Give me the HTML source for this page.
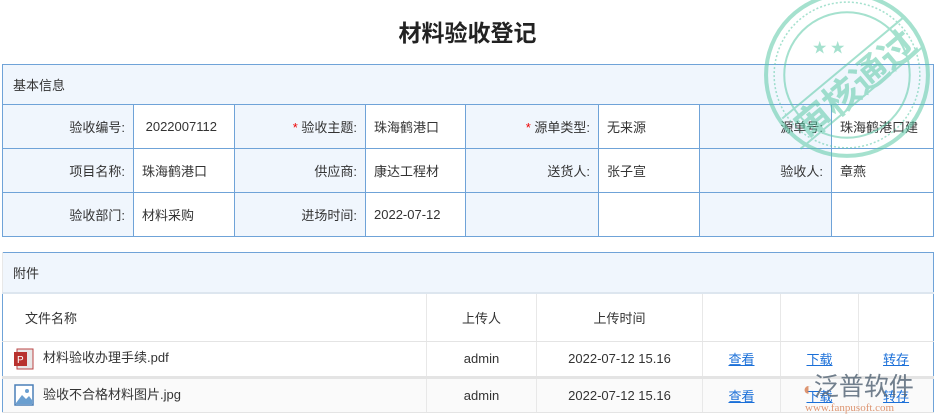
<!DOCTYPE html>
<html><head><meta charset="utf-8"><style>
body{margin:0;width:935px;height:420px;background:#fff;font-family:"Liberation Sans","Noto Sans CJK SC",sans-serif;font-size:13px;color:#333;position:relative;overflow:hidden}
.t{position:absolute;left:0;top:14px;width:935px;text-align:center;font-size:23px;font-weight:bold;color:#222}
table{border-collapse:collapse;position:absolute;table-layout:fixed}
#a{left:2px;top:64px;width:931px}
#a td{border:1px solid #6fa3d8;height:43px;padding:0 8px}
#a td.l{background:#f0f6fd;text-align:right;color:#333}
#a td.h{background:#f0f6fd;height:39px;padding-left:10px}
.r{color:#e00}
#b{left:2px;top:252px;width:931px;border:1px solid #6fa3d8}
#b td{border-bottom:1px solid #e4e4e4;border-left:1px solid #e8e8e8;text-align:center;padding:0}
#b td.h{background:#f0f6fd;height:39px;text-align:left;padding-left:10px;border-bottom:2px solid #dde6ef}
a{color:#1a6fd8;text-decoration:underline}
.ic{display:inline-block;vertical-align:middle;margin-right:8px}
</style></head><body>
<div class="t">材料验收登记</div>
<table id="a">
<colgroup><col style="width:131px"><col style="width:101px"><col style="width:131px"><col style="width:100px"><col style="width:133px"><col style="width:101px"><col style="width:132px"><col style="width:102px"></colgroup>
<tr><td class="h" colspan="8">基本信息</td></tr>
<tr><td class="l">验收编号:</td><td>&nbsp;2022007112</td><td class="l"><span class="r">*</span> 验收主题:</td><td>珠海鹤港口</td><td class="l"><span class="r">*</span> 源单类型:</td><td>无来源</td><td class="l">源单号:</td><td style="white-space:nowrap;overflow:hidden;padding-right:0">珠海鹤港口建</td></tr>
<tr><td class="l">项目名称:</td><td>珠海鹤港口</td><td class="l">供应商:</td><td>康达工程材</td><td class="l">送货人:</td><td>张子宣</td><td class="l">验收人:</td><td>章燕</td></tr>
<tr><td class="l">验收部门:</td><td>材料采购</td><td class="l">进场时间:</td><td>2022-07-12</td><td class="l"></td><td></td><td class="l"></td><td></td></tr>
</table>
<table id="b">
<colgroup><col style="width:424px"><col style="width:110px"><col style="width:166px"><col style="width:78px"><col style="width:78px"><col style="width:75px"></colgroup>
<tr><td class="h" colspan="6">附件</td></tr>
<tr style="height:48px"><td style="text-align:left;padding-left:22px;border-left:0">文件名称</td><td>上传人</td><td>上传时间</td><td></td><td></td><td></td></tr>
<tr style="height:36px;border-bottom:3px solid #e4e4e4"><td style="text-align:left;padding-left:10px;border-left:0"><svg class="ic" width="22" height="22" viewBox="0 0 22 22"><rect x="4" y="1" width="16" height="20" fill="#e8e8e8" stroke="#b44"/><rect x="1" y="4" width="13" height="14" fill="#b8322e"/><text x="4" y="15" font-size="10" fill="#fff" font-family="Liberation Sans">P</text></svg>材料验收办理手续.pdf</td><td>admin</td><td>2022-07-12 15.16</td><td><a>查看</a></td><td><a>下载</a></td><td><a>转存</a></td></tr>
<tr style="height:35px;background:#fafafa"><td style="text-align:left;padding-left:10px;border-left:0"><svg class="ic" width="22" height="22" viewBox="0 0 22 22"><rect x="2" y="1" width="18" height="20" fill="#fff" stroke="#4a7fb8" stroke-width="1.5"/><path d="M3 19 L9 11 L13 15 L16 12 L19 16 V20 H3Z" fill="#6a9fd0"/><circle cx="14" cy="7" r="2" fill="#6a9fd0"/></svg>验收不合格材料图片.jpg</td><td>admin</td><td>2022-07-12 15.16</td><td><a>查看</a></td><td><a>下载</a></td><td><a>转存</a></td></tr>
</table>
<svg style="position:absolute;left:762px;top:-8px" width="172" height="172" viewBox="0 0 170 170" opacity="0.55">
<g fill="none" stroke="#5cc9a7"><circle cx="84" cy="82" r="80" stroke-width="4"/><circle cx="84" cy="82" r="72" stroke-width="1.5" stroke-dasharray="2 2"/><circle cx="84" cy="82" r="62" stroke-width="2"/>
<line x1="20" y1="125" x2="140" y2="25" stroke-width="2"/><line x1="38" y1="155" x2="158" y2="55" stroke-width="2"/></g>
<text x="84" y="108" transform="rotate(-40 84 82)" text-anchor="middle" font-size="36" font-weight="bold" fill="#5cc9a7" font-family="Noto Sans CJK SC,sans-serif">审核通过</text>
<text x="50" y="60" fill="#5cc9a7" font-size="14">★ ★</text>
</svg>
<div style="position:absolute;left:803px;top:374px;width:132px;color:#5a6a7a;opacity:0.85">
<div style="font-size:25px;line-height:26px;letter-spacing:0px;white-space:nowrap"><span style="color:#d9845a;font-size:18px">◐</span>泛普软件</div>
<div style="font-size:11px;color:#d9845a;font-family:'Liberation Serif',serif;margin-left:2px;white-space:nowrap">www.fanpusoft.com</div></div>
</body></html>
